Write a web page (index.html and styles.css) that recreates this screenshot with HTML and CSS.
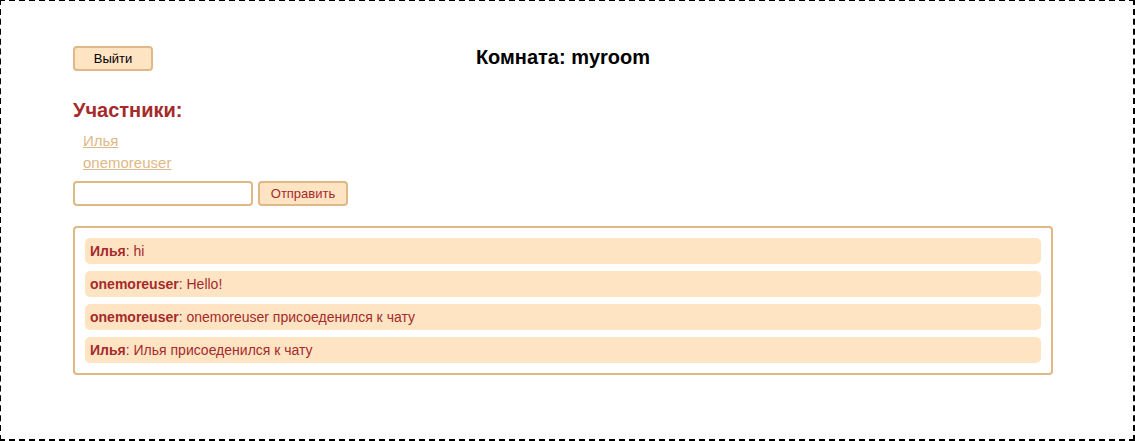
FILE: index.html
```html
<!DOCTYPE html>
<html lang="ru">
<head>
<meta charset="utf-8">
<title>Комната</title>
<link rel="stylesheet" href="styles.css">
</head>
<body>
<div class="page">
  <div class="header">
    <button class="btn btn-exit">Выйти</button>
    <h1 class="title">Комната: myroom</h1>
  </div>
  <h2 class="members-title">Участники:</h2>
  <ul class="members">
    <li><a href="#">Илья</a></li>
    <li><a href="#">onemoreuser</a></li>
  </ul>
  <form class="send-form">
    <input class="msg-input" type="text" autofocus>
    <button class="btn btn-send" type="button">Отправить</button>
  </form>
  <div class="messages">
    <div class="msg"><b>Илья</b>: hi</div>
    <div class="msg"><b>onemoreuser</b>: Hello!</div>
    <div class="msg"><b>onemoreuser</b>: onemoreuser присоеденился к чату</div>
    <div class="msg"><b>Илья</b>: Илья присоеденился к чату</div>
  </div>
</div>
</body>
</html>
```
FILE: styles.css
```css
html, body {
  margin: 0;
  padding: 0;
  overflow: hidden;
}
body {
  font-family: "Liberation Sans", Arial, sans-serif;
  background: #fff;
}
.page {
  box-sizing: border-box;
  height: 442px;
  width: 1136px;
  margin: -1px 0 0 -1px;
  border: 2px dashed #000;
  padding: 45px 80px 0 72px;
}
.header {
  display: flex;
  align-items: center;
  height: 25px;
}
.title {
  flex: 1;
  margin: 0 0 0 -80px;
  text-align: center;
  font-size: 20px;
  font-weight: bold;
  color: #000;
  position: relative;
  top: -1px;
}
.btn {
  box-sizing: border-box;
  height: 25px;
  background: #ffe4c4;
  border: 2px solid #deb887;
  border-radius: 4px;
  font-family: "Liberation Sans", Arial, sans-serif;
  font-size: 13px;
  padding: 0;
  cursor: pointer;
}
.btn-exit {
  width: 80px;
  color: #000;
  position: relative;
  z-index: 1;
}
.btn-send {
  width: 90px;
  color: #a52a2a;
}
.members-title {
  margin: 28px 0 0 0;
  font-size: 20px;
  font-weight: bold;
  color: #a52a2a;
  line-height: 23px;
}
.members {
  list-style: none;
  margin: 8px 0 0 0;
  padding: 0 0 0 10px;
}
.members li {
  font-size: 15px;
  line-height: 22px;
}
.members a {
  color: #deb887;
}
.send-form {
  display: flex;
  gap: 5px;
  margin: 7px 0 0 0;
}
.msg-input {
  box-sizing: border-box;
  width: 180px;
  height: 25px;
  border: 2px solid #deb887;
  border-radius: 4px;
  padding: 0 5px;
  font-size: 14px;
  color: #a52a2a;
  caret-color: #a52a2a;
  outline: none;
}
.messages {
  margin-top: 20px;
  border: 2px solid #deb887;
  border-radius: 4px;
  padding: 10px;
  display: flex;
  flex-direction: column;
  gap: 7px;
}
.msg {
  background: #ffe4c4;
  border-radius: 5px;
  height: 26px;
  line-height: 26px;
  padding: 0 5px;
  font-size: 14px;
  color: #a52a2a;
}
.msg b {
  font-weight: bold;
}
```
